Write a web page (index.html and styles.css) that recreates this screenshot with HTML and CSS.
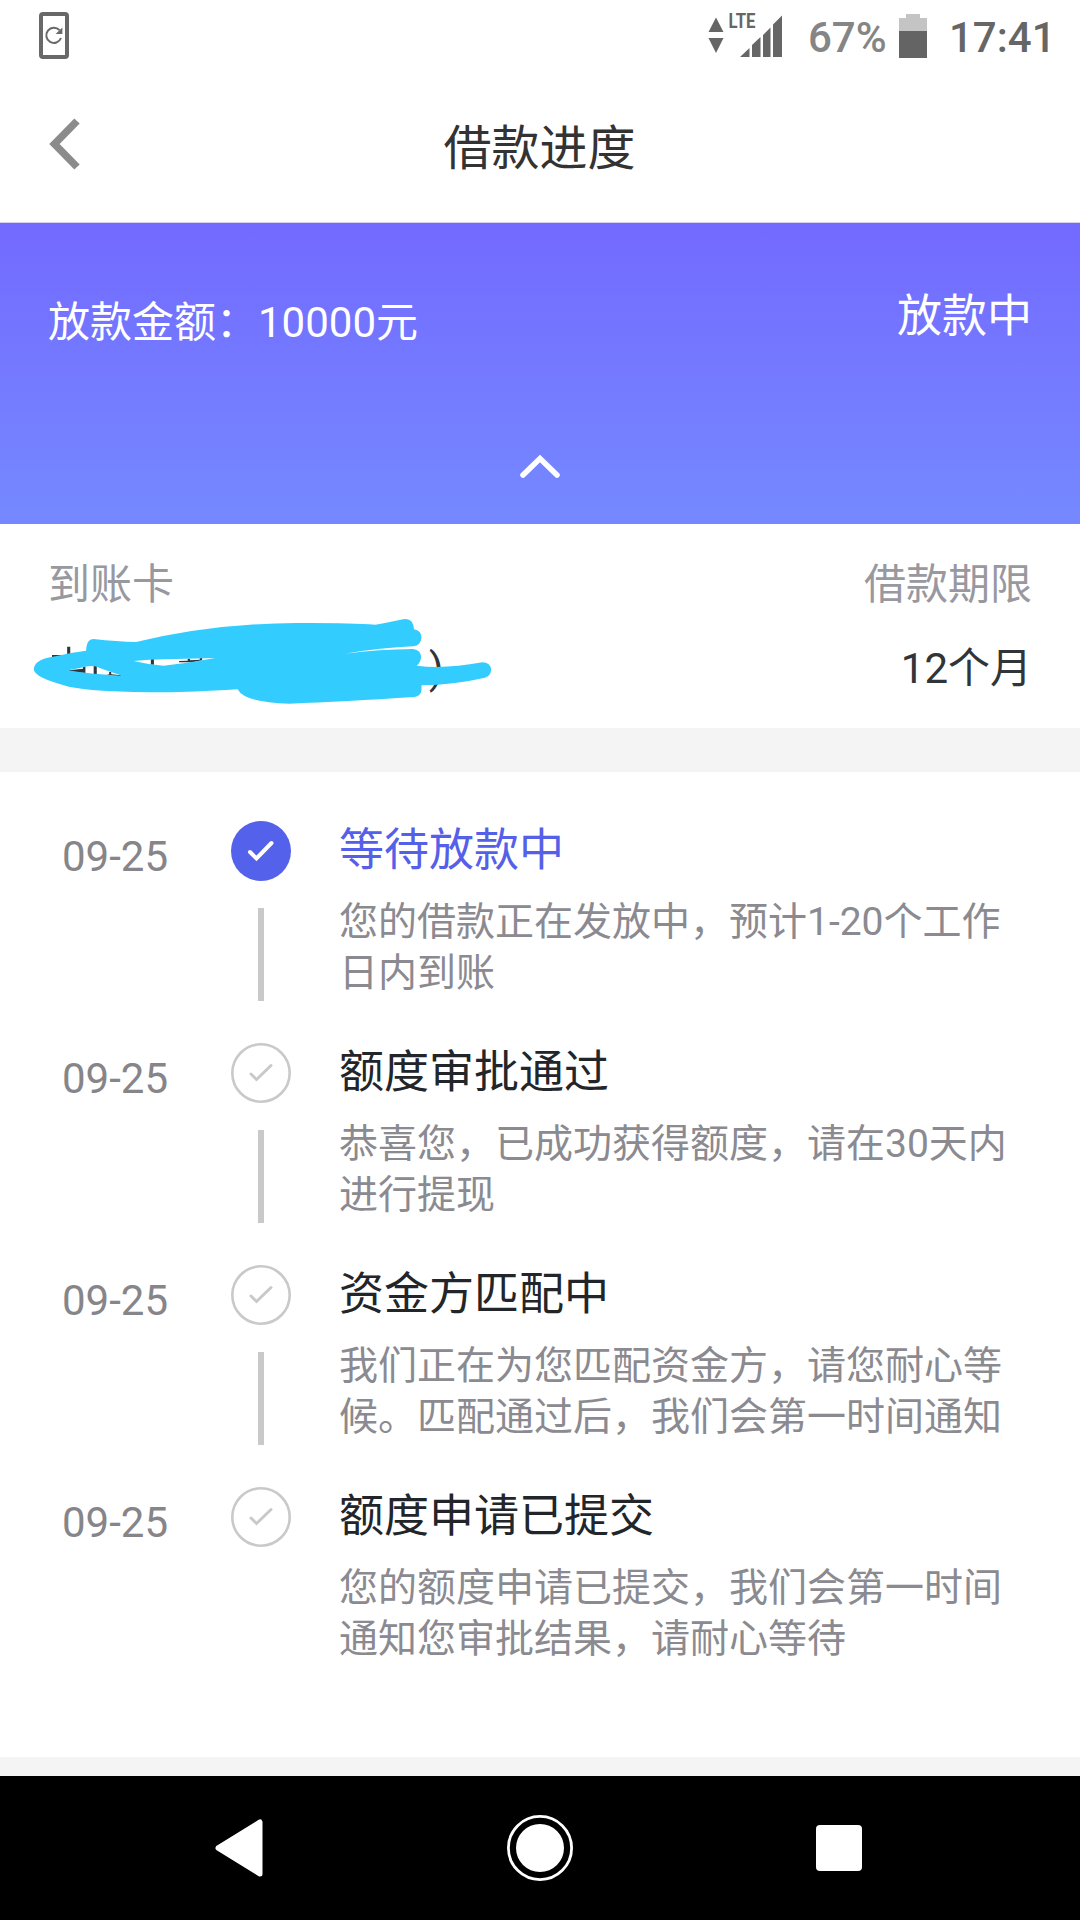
FILE: index.html
```html
<!DOCTYPE html>
<html lang="zh-CN">
<head>
<meta charset="utf-8">
<title>借款进度</title>
<link rel="stylesheet" href="styles.css">
</head>
<body>
<div class="screen">
  <div class="status-bar">
    <svg class="status-phone" width="30" height="47" viewBox="0 0 30 47">
      <rect x="2" y="2" width="26" height="43" rx="2" fill="none" stroke="#686868" stroke-width="4"/>
      <path d="M22 26A7.6 7.6 0 1 1 20.5 18.2" fill="none" stroke="#686868" stroke-width="2"/>
      <path d="M23.4 15.4V22H16.6Z" fill="#686868"/>
    </svg>
    <div class="status-right">
      <svg class="status-signal" width="75" height="50" viewBox="0 -4 75 50" fill="#666">
        <path d="M8 5.500L15.500 20H.5ZM.5 26H15.500L8 41Z"/>
        <text class="lte" x="20.500" y="15.800" textLength="27" lengthAdjust="spacingAndGlyphs">LTE</text>
        <path d="M32 45L41.500 36V45ZM44 33L52.500 25V45H44ZM55 23L62.500 15.500V45H55ZM65 12.500L74 3.500V45H65Z"/>
      </svg>
      <span class="battery-level">67%</span>
      <svg class="battery" width="28" height="44" viewBox="0 0 28 44">
        <path d="M7 0H21V4H28V17H0V4H7Z" fill="#c4c4c4"/>
        <rect y="17" width="28" height="27" fill="#646464"/>
      </svg>
      <span class="clock">17:41</span>
    </div>
  </div>

  <div class="title-bar">
    <svg class="back" width="34" height="56" viewBox="0 0 34 56"><path d="M30 5L7.500 28L30 51" fill="none" stroke="#8b8b8b" stroke-width="7.500"/></svg>
    <h1 class="page-title">借款进度</h1>
  </div>

  <section class="summary">
    <div class="summary-row">
      <span class="amount">放款金额：10000元</span>
      <span class="state">放款中</span>
    </div>
    <svg class="collapse" width="44" height="26" viewBox="0 0 44 26"><path d="M5 21L22 4.500L39 21" fill="none" stroke="#fff" stroke-width="5.500" stroke-linecap="round"/></svg>
  </section>

  <section class="details">
    <div class="detail">
      <span class="label">到账卡</span>
      <span class="value card-tail">)</span>
    </div>
    <div class="detail detail-end">
      <span class="label">借款期限</span>
      <span class="value">12个月</span>
    </div>
    <svg class="scribble" width="540" height="188" viewBox="0 0 1568 564" preserveAspectRatio="none">
      <path d="M151 345H195V320H204V352H151ZM200 391L241 386V380H248V399L200 395ZM272 378H281V405H272ZM317 396H323V403L352 406V408H300L317 403ZM438 356H447V374H438ZM520 363L545 362V356H552V361L580 359V354H587V361L560 367H520Z" fill="#30353a"/>
      <path fill="#33ccff" fill-rule="evenodd" d="M250 332L251 320Q254 298 272 297Q340 305 395 306Q620 250 860 249Q1010 248 1090 254Q1120 250 1170 238Q1200 232 1202 268Q1224 272 1224 293Q1222 315 1200 319Q1110 323 1000 341Q1100 328 1200 327Q1222 330 1223 352Q1221 368 1210 377Q1290 388 1400 367Q1425 367 1426 390Q1425 407 1408 413Q1320 434 1224 436V450Q1222 468 1203 471Q1000 485 840 491Q710 488 690 448Q550 457 480 457Q280 457 200 440Q98 413 98 388Q100 359 150 351Q200 338 250 332ZM198 391Q230 385 255 379Q275 376 290 384Q315 394 354 407Q270 404 198 391ZM388 363Q430 359 480 358L625 354Q540 370 475 377Q430 374 388 363Z"/>
    </svg>
  </section>

  <ol class="timeline">
    <li class="step step-current">
      <span class="date">09-25</span>
      <div class="rail">
        <svg class="mark" width="60" height="60" viewBox="0 0 60 60"><circle cx="30" cy="30" r="30" fill="#5461eb"/><path d="M19 31L25.500 37.500L40.500 22" fill="none" stroke="#fff" stroke-width="4" stroke-linecap="round"/></svg>
        <span class="line"></span>
      </div>
      <div class="body"><h2 class="step-title">等待放款中</h2><p class="desc">您的借款正在发放中，预计1-20个工作<br>日内到账</p></div>
    </li>
    <li class="step">
      <span class="date">09-25</span>
      <div class="rail">
        <svg class="mark" width="60" height="60" viewBox="0 0 60 60" fill="none" stroke="#c9c9c9"><circle cx="30" cy="30" r="28.700" stroke-width="2.600"/><path d="M20 31L25.500 36.500L40 22.500" stroke-width="3" stroke-linecap="round"/></svg>
        <span class="line"></span>
      </div>
      <div class="body"><h2 class="step-title">额度审批通过</h2><p class="desc">恭喜您，已成功获得额度，请在30天内<br>进行提现</p></div>
    </li>
    <li class="step">
      <span class="date">09-25</span>
      <div class="rail">
        <svg class="mark" width="60" height="60" viewBox="0 0 60 60" fill="none" stroke="#c9c9c9"><circle cx="30" cy="30" r="28.700" stroke-width="2.600"/><path d="M20 31L25.500 36.500L40 22.500" stroke-width="3" stroke-linecap="round"/></svg>
        <span class="line"></span>
      </div>
      <div class="body"><h2 class="step-title">资金方匹配中</h2><p class="desc">我们正在为您匹配资金方，请您耐心等<br>候。匹配通过后，我们会第一时间通知</p></div>
    </li>
    <li class="step">
      <span class="date">09-25</span>
      <div class="rail">
        <svg class="mark" width="60" height="60" viewBox="0 0 60 60" fill="none" stroke="#c9c9c9"><circle cx="30" cy="30" r="28.700" stroke-width="2.600"/><path d="M20 31L25.500 36.500L40 22.500" stroke-width="3" stroke-linecap="round"/></svg>
      </div>
      <div class="body"><h2 class="step-title">额度申请已提交</h2><p class="desc">您的额度申请已提交，我们会第一时间<br>通知您审批结果，请耐心等待</p></div>
    </li>
  </ol>

  <nav class="nav-bar">
    <svg width="50" height="58" viewBox="0 0 50 58"><path d="M46 3V55L4 29Z" fill="#fff" stroke="#fff" stroke-width="5" stroke-linejoin="round"/></svg>
    <svg width="66" height="66" viewBox="0 0 66 66"><circle cx="33" cy="33" r="31.600" fill="none" stroke="#fff" stroke-width="2.800"/><circle cx="33" cy="33" r="24" fill="#fff"/></svg>
    <svg width="46" height="46" viewBox="0 0 46 46"><rect width="46" height="46" rx="4" fill="#fff"/></svg>
  </nav>
</div>
</body>
</html>
```
FILE: styles.css
```css
* { box-sizing: border-box; }

body {
  margin: 0;
  background: #f4f4f4;
  font-family: Roboto, "Noto Sans CJK SC", sans-serif;
  font-size: 42px;
  color: #30353a;
}

h1, h2, p, ol { margin: 0; padding: 0; font-weight: 400; }
svg { display: block; flex: none; overflow: visible; }

.screen {
  width: 1080px;
  height: 1920px;
  display: flex;
  flex-direction: column;
  overflow: hidden;
}

.status-bar {
  height: 74px;
  padding: 8px 30px 0 39px;
  background: #fff;
  display: flex;
  justify-content: space-between;
  align-items: flex-start;
}

.status-phone { margin-top: 4px; }

.status-right {
  display: flex;
  align-items: flex-start;
  height: 60px;
  line-height: 60px;
  font-weight: 500;
}

.lte { font-size: 20px; font-weight: 700; }
.battery-level { width: 83px; margin-left: 25px; color: #858585; }
.battery { margin: 6px 22px 0 8px; }
.clock { width: 101px; color: #666; white-space: nowrap; }

.title-bar {
  height: 149px;
  background: #fff;
  border-bottom: 1px solid #d6d2f2;
  display: grid;
  grid-template-columns: 1fr auto 1fr;
  padding: 42px 48px 0 47px;
  align-items: start;
}

.page-title { font-size: 48px; line-height: 66px; color: #333; }

.summary {
  height: 301px;
  padding: 62px 48px 0;
  background: linear-gradient(#736aff, #7589ff);
  color: #fff;
  display: flex;
  flex-direction: column;
  align-items: center;
}

.summary-row {
  width: 100%;
  height: 169px;
  display: flex;
  justify-content: space-between;
  line-height: 62px;
}

.amount { padding-top: 7px; }
.state { font-size: 45px; padding-top: 1px; }

.details {
  position: relative;
  height: 204px;
  padding: 30px 48px 0;
  background: #fff;
  display: flex;
  justify-content: space-between;
  line-height: 62px;
}

.detail { display: flex; flex-direction: column; gap: 22px; }
.detail-end { text-align: right; }
.label { color: #98989f; }
.card-tail { padding-left: 381px; }

.scribble { position: absolute; left: 0; top: 16px; }

.timeline {
  height: 985px;
  margin-top: 44px;
  padding: 49px 62px 0;
  background: #fff;
  list-style: none;
}

.step {
  height: 222px;
  display: grid;
  grid-template-columns: 169px 60px 1fr;
}

.date { line-height: 72px; color: #85858a; }
.rail { display: flex; flex-direction: column; align-items: center; gap: 27px; }
.line { width: 6px; height: 93px; background: #c9c9c9; }
.body { padding-left: 48px; white-space: nowrap; }
.step-title { font-size: 45px; line-height: 60px; color: #222529; }
.step-current .step-title { color: #5560e8; }
.desc { padding-top: 16px; font-size: 39px; line-height: 51px; color: #8a8a90; }

.nav-bar {
  height: 144px;
  margin-top: auto;
  padding: 0 218px 0 214px;
  background: #000;
  display: flex;
  align-items: center;
  justify-content: space-between;
}
```
